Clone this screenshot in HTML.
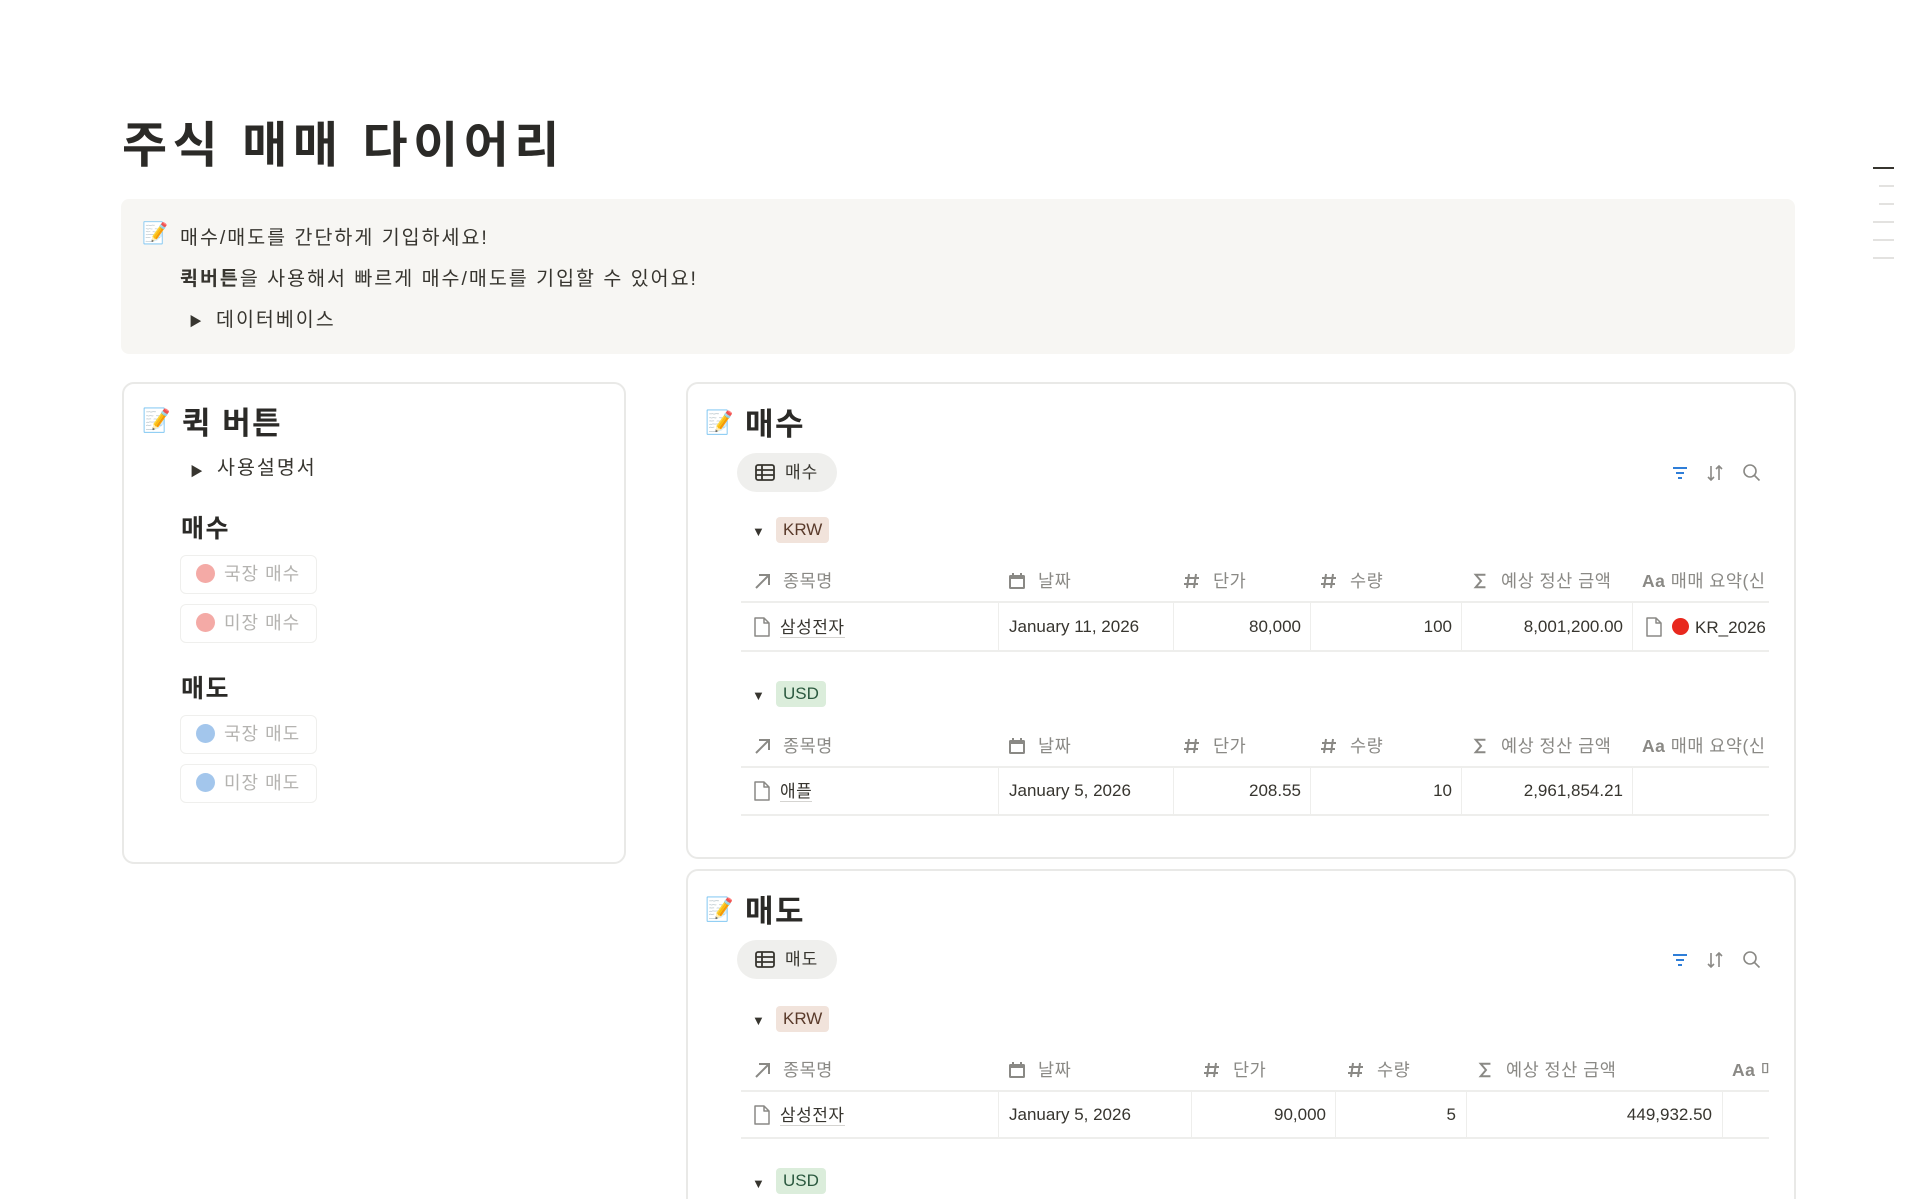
<!DOCTYPE html>
<html><head><meta charset="utf-8">
<style>
*{box-sizing:border-box;margin:0;padding:0}
html,body{width:1920px;height:1199px;overflow:hidden}
body{background:#fff;font-family:"Liberation Sans","Noto Sans CJK KR",sans-serif;color:#37352f;position:relative}
.a{position:absolute;white-space:nowrap}
.card{position:absolute;border:2px solid #e9e9e7;border-radius:12px;background:#fff}
.h{font-weight:700;color:#2b2a27}
.btn{position:absolute;left:180px;width:137px;height:39px;border:1px solid #efefed;border-radius:6px;color:#b4b3b0;font-size:18px;line-height:37px;padding-left:15px;white-space:nowrap;letter-spacing:1px}
.btn i{display:inline-block;width:19px;height:19px;border-radius:50%;vertical-align:-3px;margin-right:9px}
.th{position:absolute;font-size:17.5px;color:#8a8985;line-height:22px;white-space:nowrap;letter-spacing:.5px}
.th svg{vertical-align:-3px;margin-right:12px}
.td{position:absolute;font-size:17px;color:#37352f;line-height:22px;white-space:nowrap}
.td svg{vertical-align:-5px;margin-right:9px}
.ln{position:absolute;height:2px;background:#eeeeec}
.vl{position:absolute;width:1px;background:#eeeeec}
.tag{position:absolute;font-size:17px;line-height:26px;height:26px;padding:0 7px;border-radius:4px}
.tri{position:absolute;font-size:13px}
.u{border-bottom:1.5px solid #d5d4d1;letter-spacing:.5px}
.ls{letter-spacing:2px}
</style></head><body>
<svg width="0" height="0" style="position:absolute">
<defs>
<symbol id="arr" viewBox="0 0 18 18"><path d="M3 16L15 4M6 3h10v10" stroke="#8a8985" stroke-width="2" fill="none"/></symbol>
<symbol id="cal" viewBox="0 0 18 18"><rect x="1" y="3" width="16" height="14" rx="1.5" fill="#8a8985"/><rect x="3" y="7" width="12" height="8" fill="#fff"/><path d="M5 1v4M13 1v4" stroke="#8a8985" stroke-width="2"/></symbol>
<symbol id="hash" viewBox="0 0 18 18"><path d="M6 2L4 16M13 2l-2 14M2 6h14M1 12h14" stroke="#8a8985" stroke-width="2" fill="none"/></symbol>
<symbol id="sig" viewBox="0 0 18 18"><path d="M14 2H3l6 7-6 7h11" stroke="#8a8985" stroke-width="2.2" fill="none"/></symbol>
<symbol id="doc" viewBox="0 0 18 22"><path d="M2 2h9l5 5v13H2z M11 2v5h5" stroke="#8a8985" stroke-width="1.5" fill="none" stroke-linejoin="round"/></symbol>
</defs></svg>

<div class="a h" style="left:122px;top:114px;font-size:49px;line-height:64px;letter-spacing:5.5px">주식 매매 다이어리</div>

<div class="a" style="left:121px;top:199px;width:1674px;height:155px;background:#f7f6f3;border-radius:8px"></div>
<div class="a" style="left:142px;top:222px;font-size:21px">📝</div>
<div class="a ls" style="left:180px;top:225px;font-size:19.5px;line-height:26px">매수/매도를 간단하게 기입하세요!</div>
<div class="a ls" style="left:180px;top:266px;font-size:19.5px;line-height:26px"><b>퀵버튼</b>을 사용해서 빠르게 매수/매도를 기입할 수 있어요!</div>
<div class="a" style="left:189px;top:311px;font-size:13px">▶</div>
<div class="a ls" style="left:216px;top:307px;font-size:19.5px;line-height:26px">데이터베이스</div>

<div class="a" style="left:1873px;top:167px;width:21px;height:2px;background:#37352f"></div>
<div class="a" style="left:1879px;top:185px;width:15px;height:2px;background:#e3e2e0"></div>
<div class="a" style="left:1879px;top:203px;width:15px;height:2px;background:#e3e2e0"></div>
<div class="a" style="left:1873px;top:221px;width:21px;height:2px;background:#e3e2e0"></div>
<div class="a" style="left:1873px;top:239px;width:21px;height:2px;background:#e3e2e0"></div>
<div class="a" style="left:1873px;top:257px;width:21px;height:2px;background:#e3e2e0"></div>

<div class="card" style="left:122px;top:382px;width:504px;height:482px"></div>
<div class="a" style="left:142px;top:407px;font-size:23px">📝</div>
<div class="a h" style="left:182px;top:404px;font-size:31px;line-height:40px;letter-spacing:1.5px">퀵 버튼</div>
<div class="a" style="left:190px;top:461px;font-size:13px">▶</div>
<div class="a ls" style="left:217px;top:455px;font-size:19.5px;line-height:26px">사용설명서</div>
<div class="a h" style="left:181px;top:513px;font-size:25px;line-height:32px;letter-spacing:1.5px">매수</div>
<div class="btn" style="top:555px"><i style="background:#f4aaa6"></i>국장 매수</div>
<div class="btn" style="top:604px"><i style="background:#f4aaa6"></i>미장 매수</div>
<div class="a h" style="left:181px;top:673px;font-size:25px;line-height:32px;letter-spacing:1.5px">매도</div>
<div class="btn" style="top:715px"><i style="background:#a3c6ec"></i>국장 매도</div>
<div class="btn" style="top:764px"><i style="background:#a3c6ec"></i>미장 매도</div>

<div class="card" style="left:686px;top:382px;width:1110px;height:477px"></div>
<div class="a" style="left:705px;top:409px;font-size:23px">📝</div>
<div class="a h" style="left:745px;top:405px;font-size:31px;line-height:40px;letter-spacing:1.5px">매수</div>
<div class="a" style="left:737px;top:453px;width:100px;height:39px;border-radius:20px;background:#efefed"></div>
<svg class="a" style="left:755px;top:464px" width="20" height="17" viewBox="0 0 20 17"><rect x="1" y="1" width="18" height="15" rx="2" fill="none" stroke="#37352f" stroke-width="1.8"/><path d="M1 6h18M1 11h18M7 1v15" stroke="#37352f" stroke-width="1.8"/></svg>
<div class="a" style="left:785px;top:462px;font-size:17px;line-height:22px;letter-spacing:1px">매수</div>
<svg class="a" style="left:1671px;top:465px" width="18" height="16"><path d="M2 3h14M5 8h8M7 13h4" stroke="#2f7ed8" stroke-width="2"/></svg>
<svg class="a" style="left:1706px;top:463px" width="18" height="20"><path d="M5 3v14M2 14l3 3 3-3M13 17V3M10 6l3-3 3 3" stroke="#8a8985" stroke-width="1.6" fill="none"/></svg>
<svg class="a" style="left:1742px;top:463px" width="20" height="20"><circle cx="8" cy="8" r="6" stroke="#8a8985" stroke-width="1.6" fill="none"/><path d="M12.5 12.5l5 5" stroke="#8a8985" stroke-width="1.6"/></svg>

<div class="tri" style="left:752px;top:524px">▼</div>
<div class="tag" style="left:776px;top:517px;background:#f1e3db;color:#5a3a2a">KRW</div>
<div class="th" style="left:753px;top:570px"><svg width="18" height="18"><use href="#arr"/></svg>종목명</div>
<div class="th" style="left:1008px;top:570px"><svg width="18" height="18"><use href="#cal"/></svg>날짜</div>
<div class="th" style="left:1183px;top:570px"><svg width="18" height="18"><use href="#hash"/></svg>단가</div>
<div class="th" style="left:1320px;top:570px"><svg width="18" height="18"><use href="#hash"/></svg>수량</div>
<div class="th" style="left:1473px;top:570px"><svg width="16" height="18"><use href="#sig"/></svg>예상 정산 금액</div>
<div class="th" style="left:1642px;top:570px;width:127px;overflow:hidden"><b>Aa</b> 매매 요약(신</div>
<div class="ln" style="left:741px;top:601px;width:1028px"></div>
<div class="vl" style="left:998px;top:603px;height:48px"></div><div class="vl" style="left:1173px;top:603px;height:48px"></div><div class="vl" style="left:1310px;top:603px;height:48px"></div><div class="vl" style="left:1461px;top:603px;height:48px"></div><div class="vl" style="left:1632px;top:603px;height:48px"></div>
<div class="td" style="left:753px;top:616px"><svg width="18" height="22"><use href="#doc"/></svg><span class="u">삼성전자</span></div>
<div class="td" style="left:1009px;top:616px">January 11, 2026</div>
<div class="td" style="left:1173px;top:616px;width:128px;text-align:right">80,000</div>
<div class="td" style="left:1310px;top:616px;width:142px;text-align:right">100</div>
<div class="td" style="left:1461px;top:616px;width:162px;text-align:right">8,001,200.00</div>
<div class="td" style="left:1645px;top:616px;width:124px;overflow:hidden"><svg width="18" height="22"><use href="#doc"/></svg><span style="display:inline-block;width:17px;height:17px;border-radius:50%;background:#e8281e;vertical-align:-2px;margin-right:6px"></span>KR_2026</div>
<div class="ln" style="left:741px;top:650px;width:1028px"></div>

<div class="tri" style="left:752px;top:688px">▼</div>
<div class="tag" style="left:776px;top:681px;background:#dbeddb;color:#2b593f">USD</div>
<div class="th" style="left:753px;top:735px"><svg width="18" height="18"><use href="#arr"/></svg>종목명</div>
<div class="th" style="left:1008px;top:735px"><svg width="18" height="18"><use href="#cal"/></svg>날짜</div>
<div class="th" style="left:1183px;top:735px"><svg width="18" height="18"><use href="#hash"/></svg>단가</div>
<div class="th" style="left:1320px;top:735px"><svg width="18" height="18"><use href="#hash"/></svg>수량</div>
<div class="th" style="left:1473px;top:735px"><svg width="16" height="18"><use href="#sig"/></svg>예상 정산 금액</div>
<div class="th" style="left:1642px;top:735px;width:127px;overflow:hidden"><b>Aa</b> 매매 요약(신</div>
<div class="ln" style="left:741px;top:766px;width:1028px"></div>
<div class="vl" style="left:998px;top:768px;height:47px"></div><div class="vl" style="left:1173px;top:768px;height:47px"></div><div class="vl" style="left:1310px;top:768px;height:47px"></div><div class="vl" style="left:1461px;top:768px;height:47px"></div><div class="vl" style="left:1632px;top:768px;height:47px"></div>
<div class="td" style="left:753px;top:780px"><svg width="18" height="22"><use href="#doc"/></svg><span class="u">애플</span></div>
<div class="td" style="left:1009px;top:780px">January 5, 2026</div>
<div class="td" style="left:1173px;top:780px;width:128px;text-align:right">208.55</div>
<div class="td" style="left:1310px;top:780px;width:142px;text-align:right">10</div>
<div class="td" style="left:1461px;top:780px;width:162px;text-align:right">2,961,854.21</div>
<div class="ln" style="left:741px;top:814px;width:1028px"></div>

<div class="card" style="left:686px;top:869px;width:1110px;height:360px"></div>
<div class="a" style="left:705px;top:896px;font-size:23px">📝</div>
<div class="a h" style="left:745px;top:892px;font-size:31px;line-height:40px;letter-spacing:1.5px">매도</div>
<div class="a" style="left:737px;top:940px;width:100px;height:39px;border-radius:20px;background:#efefed"></div>
<svg class="a" style="left:755px;top:951px" width="20" height="17" viewBox="0 0 20 17"><rect x="1" y="1" width="18" height="15" rx="2" fill="none" stroke="#37352f" stroke-width="1.8"/><path d="M1 6h18M1 11h18M7 1v15" stroke="#37352f" stroke-width="1.8"/></svg>
<div class="a" style="left:785px;top:949px;font-size:17px;line-height:22px;letter-spacing:1px">매도</div>
<svg class="a" style="left:1671px;top:952px" width="18" height="16"><path d="M2 3h14M5 8h8M7 13h4" stroke="#2f7ed8" stroke-width="2"/></svg>
<svg class="a" style="left:1706px;top:950px" width="18" height="20"><path d="M5 3v14M2 14l3 3 3-3M13 17V3M10 6l3-3 3 3" stroke="#8a8985" stroke-width="1.6" fill="none"/></svg>
<svg class="a" style="left:1742px;top:950px" width="20" height="20"><circle cx="8" cy="8" r="6" stroke="#8a8985" stroke-width="1.6" fill="none"/><path d="M12.5 12.5l5 5" stroke="#8a8985" stroke-width="1.6"/></svg>

<div class="tri" style="left:752px;top:1013px">▼</div>
<div class="tag" style="left:776px;top:1006px;background:#f1e3db;color:#5a3a2a">KRW</div>
<div class="th" style="left:753px;top:1059px"><svg width="18" height="18"><use href="#arr"/></svg>종목명</div>
<div class="th" style="left:1008px;top:1059px"><svg width="18" height="18"><use href="#cal"/></svg>날짜</div>
<div class="th" style="left:1203px;top:1059px"><svg width="18" height="18"><use href="#hash"/></svg>단가</div>
<div class="th" style="left:1347px;top:1059px"><svg width="18" height="18"><use href="#hash"/></svg>수량</div>
<div class="th" style="left:1478px;top:1059px"><svg width="16" height="18"><use href="#sig"/></svg>예상 정산 금액</div>
<div class="th" style="left:1732px;top:1059px;width:37px;overflow:hidden"><b>Aa</b> 매</div>
<div class="ln" style="left:741px;top:1090px;width:1028px"></div>
<div class="vl" style="left:998px;top:1092px;height:47px"></div><div class="vl" style="left:1191px;top:1092px;height:47px"></div><div class="vl" style="left:1335px;top:1092px;height:47px"></div><div class="vl" style="left:1466px;top:1092px;height:47px"></div><div class="vl" style="left:1722px;top:1092px;height:47px"></div>
<div class="td" style="left:753px;top:1104px"><svg width="18" height="22"><use href="#doc"/></svg><span class="u">삼성전자</span></div>
<div class="td" style="left:1009px;top:1104px">January 5, 2026</div>
<div class="td" style="left:1191px;top:1104px;width:135px;text-align:right">90,000</div>
<div class="td" style="left:1335px;top:1104px;width:121px;text-align:right">5</div>
<div class="td" style="left:1466px;top:1104px;width:246px;text-align:right">449,932.50</div>
<div class="ln" style="left:741px;top:1137px;width:1028px"></div>

<div class="tri" style="left:752px;top:1176px">▼</div>
<div class="tag" style="left:776px;top:1168px;background:#dbeddb;color:#2b593f">USD</div>

</body></html>
